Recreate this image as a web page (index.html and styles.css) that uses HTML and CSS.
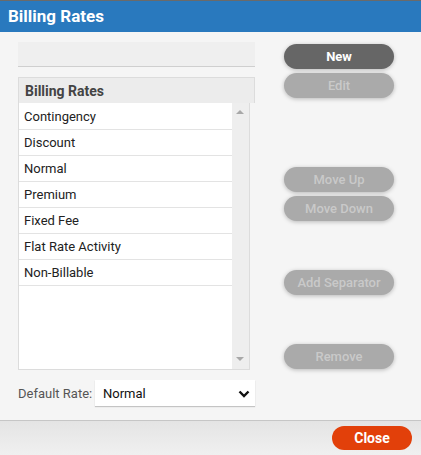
FILE: index.html
```html
<!DOCTYPE html>
<html>
<head>
<meta charset="utf-8">
<link rel="stylesheet" href="styles.css">
</head>
<body>
<div class="dialog">
  <div class="titlebar">Billing Rates</div>
  <div class="main">
    <div class="left">
      <div class="toppanel"></div>
      <div class="listhead">Billing Rates</div>
      <div class="list">
        <div class="rows">
          <div class="row">Contingency</div>
          <div class="row">Discount</div>
          <div class="row">Normal</div>
          <div class="row">Premium</div>
          <div class="row">Fixed Fee</div>
          <div class="row">Flat Rate Activity</div>
          <div class="row">Non-Billable</div>
        </div>
        <div class="scrollbar">
          <span class="arrow up"></span>
          <span class="arrow down"></span>
        </div>
      </div>
      <div class="defrow">
        <span class="deflabel">Default Rate:</span>
        <div class="select">
          <span>Normal</span>
          <svg class="chev" width="12" height="8" viewBox="0 0 12 8"><path d="M1.5 1.5 L6 6 L10.5 1.5" fill="none" stroke="#111" stroke-width="2.4"/></svg>
        </div>
      </div>
    </div>
    <div class="right">
      <div class="btn primary b-new">New</div>
      <div class="btn dis b-edit">Edit</div>
      <div class="btn dis b-up">Move Up</div>
      <div class="btn dis b-down">Move Down</div>
      <div class="btn dis b-sep">Add Separator</div>
      <div class="btn dis b-rem">Remove</div>
    </div>
  </div>
  <div class="footer">
    <div class="close">Close</div>
  </div>
</div>
</body>
</html>
```
FILE: styles.css
```css
* { box-sizing: border-box; }
html, body { margin: 0; padding: 0; }
body {
  font-family: Roboto, "Liberation Sans", sans-serif;
  background: #f5f5f5;
  width: 421px;
  height: 455px;
  overflow: hidden;
}
.dialog { display: flex; flex-direction: column; height: 455px; }
.titlebar {
  height: 32px;
  border-top: 1px solid #6a6a6a;
  background: #2979be;
  color: #fff;
  font-weight: 700;
  font-size: 17px;
  line-height: 31px;
  padding-left: 8px;
}
.main {
  flex: 1;
  display: flex;
  padding: 10px 0 0 18px;
  background: #f5f5f5;
}
.left { width: 237px; display: flex; flex-direction: column; }
.toppanel {
  height: 25px;
  background: #efefef;
  border-bottom: 1px solid #cfcfcf;
}
.listhead {
  margin-top: 10px;
  height: 26px;
  background: #ececec;
  border: 1px solid #dcdcdc;
  border-bottom: none;
  font-weight: 700;
  font-size: 14px;
  color: #444;
  line-height: 27px;
  padding-left: 6px;
}
.list {
  width: 232px;
  height: 267px;
  border: 1px solid #dcdcdc;
  border-top: none;
  display: flex;
  background: #fff;
}
.rows { flex: 1; padding-top: 1px; }
.row {
  height: 26px;
  border-bottom: 1px solid #e3e3e3;
  font-size: 13px;
  color: #222;
  line-height: 25px;
  padding-left: 5px;
}
.scrollbar {
  width: 17px;
  background: #eeeeee;
  position: relative;
}
.arrow {
  position: absolute;
  left: 4px;
  width: 0; height: 0;
  border-left: 4px solid transparent;
  border-right: 4px solid transparent;
}
.arrow.up { top: 7px; border-bottom: 4px solid #a8a8a8; }
.arrow.down { bottom: 8px; border-top: 4px solid #a8a8a8; }
.defrow {
  margin-top: 10px;
  display: flex;
  align-items: center;
  height: 26px;
}
.deflabel {
  font-size: 13px;
  color: #555;
  width: 77px;
}
.select {
  flex: 1;
  height: 26px;
  background: #fff;
  box-shadow: 0 1px 1px rgba(0,0,0,0.2);
  display: flex;
  align-items: center;
  justify-content: space-between;
  padding: 0 5px 0 8px;
  font-size: 13px;
  color: #111;
}
.chev { margin-top: 1px; }
.right {
  margin-left: 29px;
  width: 110px;
  display: flex;
  flex-direction: column;
}
.btn {
  height: 25px;
  border-radius: 13px;
  text-align: center;
  font-size: 13px;
  line-height: 25px;
  box-shadow: 0 1px 4px rgba(0,0,0,0.25);
}
.primary { background: #666; color: #fff; font-weight: 700; }
.dis { background: #aaaaaa; color: #c9c9c9; font-weight: 500; }
.b-new { margin-top: 2px; }
.b-edit { margin-top: 4px; }
.b-up { margin-top: 69px; }
.b-down { margin-top: 4px; }
.b-sep { margin-top: 49px; }
.b-rem { margin-top: 49px; }
.footer {
  height: 35px;
  border-top: 1px solid #c6c6c6;
  background: linear-gradient(#e4e4e4, #f0f0f0);
  display: flex;
  justify-content: flex-end;
  padding: 5px 9px 0 0;
}
.close {
  width: 80px;
  height: 24px;
  border-radius: 12px;
  background: #e2400a;
  color: #fff;
  font-weight: 700;
  font-size: 14px;
  text-align: center;
  line-height: 24px;
}
```
